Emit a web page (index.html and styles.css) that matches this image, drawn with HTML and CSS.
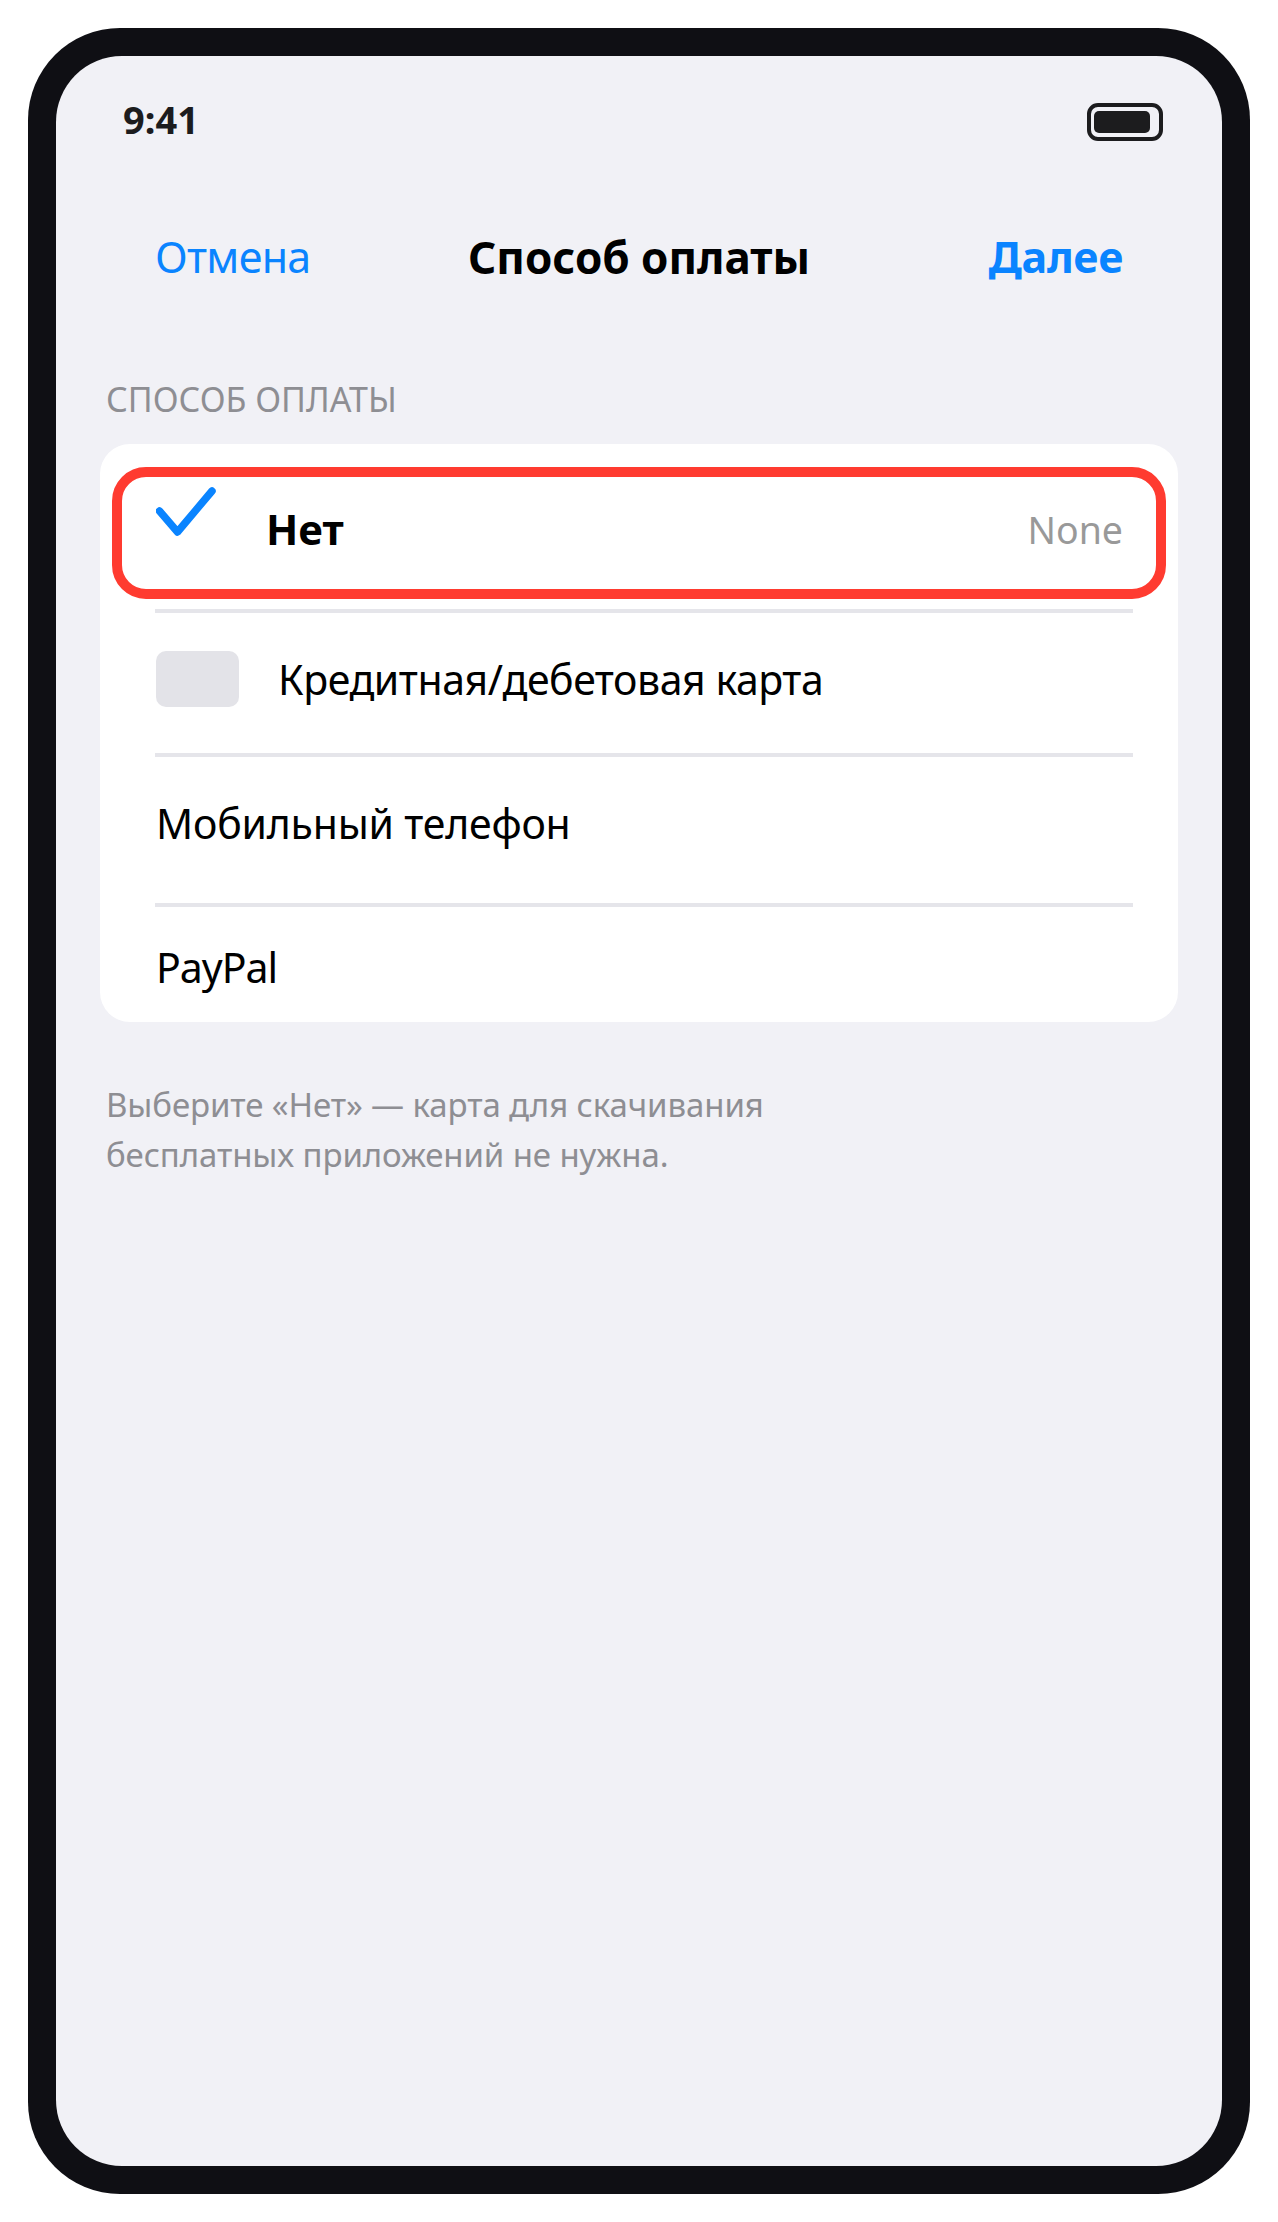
FILE: index.html
```html
<!DOCTYPE html>
<html lang="ru">
<head>
<meta charset="utf-8">
<title>Способ оплаты</title>
<link rel="stylesheet" href="styles.css">
</head>
<body>
<div class="phone">
  <div class="screen">
    <div class="status">
      <span class="time">9:41</span>
      <span class="battery"><span class="battery-fill"></span></span>
    </div>
    <nav class="nav">
      <span class="nav-cancel">Отмена</span>
      <span class="nav-title">Способ оплаты</span>
      <span class="nav-next">Далее</span>
    </nav>
    <div class="section-label">СПОСОБ ОПЛАТЫ</div>
    <div class="card">
      <div class="row-selected">
        <svg class="check" width="60" height="50" viewBox="0 0 60 50" aria-hidden="true"><path d="M3.500 24L21.500 45L56 4" fill="none" stroke="#0a84ff" stroke-width="7.500" stroke-linecap="round" stroke-linejoin="round"/></svg>
        <span class="row-name">Нет</span>
        <span class="row-value">None</span>
      </div>
      <div class="divider divider-first"></div>
      <div class="row row-card">
        <span class="card-thumb"></span>
        <span class="row-text text-card">Кредитная/дебетовая карта</span>
      </div>
      <div class="divider"></div>
      <div class="row row-phone"><span class="row-text">Мобильный телефон</span></div>
      <div class="divider"></div>
      <div class="row row-paypal"><span class="row-text text-paypal">PayPal</span></div>
    </div>
    <p class="footnote">Выберите «Нет» — карта для скачивания<br>бесплатных приложений не нужна.</p>
  </div>
</div>
</body>
</html>
```
FILE: styles.css
```css
* { box-sizing: border-box; }
html, body { margin: 0; padding: 0; background: #fff; }
body {
  width: 1278px;
  height: 2222px;
  padding: 28px;
  font-family: "Noto Sans", "Open Sans", sans-serif;
  color: #000;
}
.phone {
  width: 1222px;
  height: 2166px;
  background: #0f0f14;
  border-radius: 92px;
  padding: 28px;
}
.screen {
  height: 100%;
  background: #f1f1f6;
  border-radius: 66px;
  padding-top: 47px;
  overflow: hidden;
}
.status {
  display: flex;
  justify-content: space-between;
  align-items: center;
  height: 38px;
  padding: 0 59px 0 67px;
}
.time {
  padding-bottom: 6px;
  font-size: 38px;
  font-weight: 700;
  color: #1c1c1e;
  line-height: 38px;
}
.battery {
  display: block;
  width: 76px;
  height: 38px;
  border: 4px solid #1c1c1e;
  border-radius: 11px;
  padding: 4px 9px 4px 3px;
}
.battery-fill {
  display: block;
  width: 100%;
  height: 100%;
  background: #1c1c1e;
  border-radius: 5px;
}
.nav {
  display: grid;
  grid-template-columns: 1fr auto 1fr;
  align-items: center;
  height: 60px;
  margin-top: 86px;
  padding: 0 99px;
  font-size: 43px;
  line-height: 60px;
}
.nav-cancel { color: #0a84ff; letter-spacing: -0.7px; }
.nav-title { font-size: 44px; font-weight: 700; color: #000; }
.nav-next { justify-self: end; font-weight: 700; color: #0a84ff; letter-spacing: -0.3px; }
.section-label {
  margin: 89px 0 0 50px;
  font-size: 34px;
  line-height: 46px;
  color: #8e8e93;
}
.card {
  margin: 22px 44px 0;
  height: 578px;
  background: #fff;
  border-radius: 30px;
  padding-top: 23px;
  overflow: hidden;
}
.row-selected {
  display: flex;
  align-items: flex-start;
  height: 132px;
  margin: 0 12px;
  border: 10px solid #ff3b30;
  border-radius: 34px;
  padding: 0 33px 0 34px;
}
.check { flex: none; margin-top: 10px; }
.row-name {
  margin-left: 50px;
  margin-top: 24px;
  font-size: 42px;
  line-height: 56px;
  font-weight: 700;
}
.row-value {
  margin-left: auto;
  margin-top: 25px;
  font-size: 37.500px;
  line-height: 56px;
  color: #999;
}
.divider {
  height: 4px;
  margin: 0 45px 0 55px;
  background: #e5e5ea;
}
.divider-first { margin-top: 10px; }
.row {
  display: flex;
  align-items: center;
  padding-left: 56px;
}
.row-card { height: 140px; padding-bottom: 9px; }
.row-phone { height: 146px; padding-bottom: 14px; }
.row-paypal { height: 118px; padding-top: 1px; }
.row-text { font-size: 41px; line-height: 56px; letter-spacing: -0.2px; }
.text-card { letter-spacing: -0.45px; }
.text-paypal { letter-spacing: -1px; }
.card-thumb {
  flex: none;
  width: 83px;
  height: 56px;
  margin-right: 39px;
  background: #e3e3e8;
  border-radius: 10px;
}
.footnote {
  margin: 58px 0 0 50px;
  font-size: 33px;
  line-height: 50px;
  letter-spacing: -0.1px;
  color: #8e8e93;
}
```
